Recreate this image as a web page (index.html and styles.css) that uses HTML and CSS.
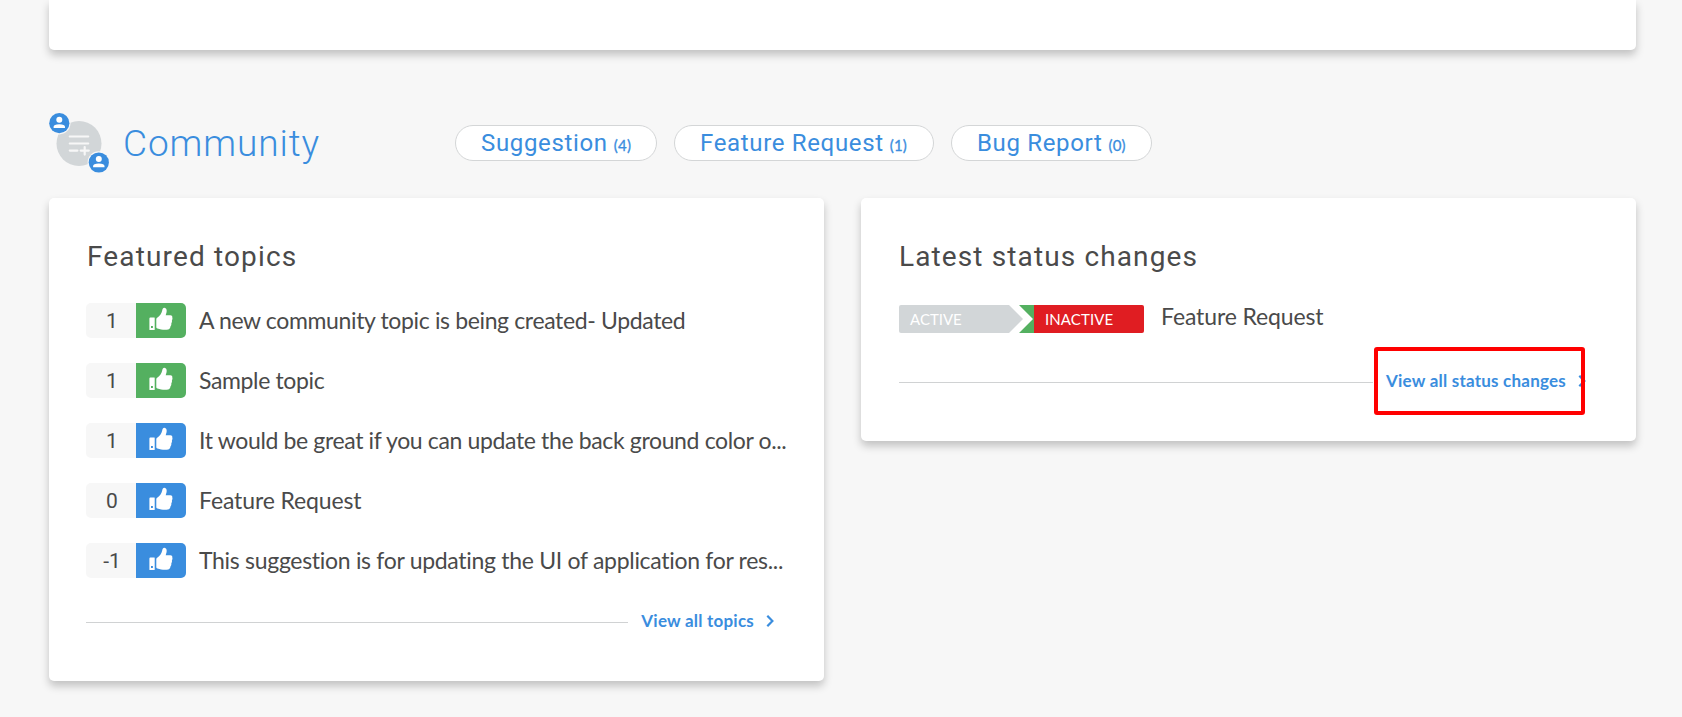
FILE: index.html
```html
<!DOCTYPE html>
<html lang="en">
<head>
<meta charset="utf-8">
<title>Community</title>
<link rel="stylesheet" href="styles.css">
</head>
<body>
<svg width="0" height="0" class="sprite" aria-hidden="true">
  <symbol id="thumb" viewBox="0 0 24 24">
    <path fill-rule="evenodd" d="M1.4 10.4H5.3Q5.7 10.4 5.7 10.8V22.4Q5.7 22.9 5.3 22.9H.9Q.4 22.9 .4 22.4V11.400Q.4 10.400 1.400 10.400ZM2 18.900V21H3.900V18.900Z"/>
    <path d="M7.300 12Q7.300 11.300 7.900 10.900C11.200 8.800 12.600 6.400 13.200 3.500C13.600 1.600 14.200 .7 15.400 .8C17.300 1 18 2.800 17.600 5L16.700 8.200H21.400C22.900 8.200 23.600 9.200 23.300 10.500C23.700 11.800 23.400 12.600 22.900 13.300C23.200 14.700 22.800 15.700 22.300 16.400C22.500 17.500 22.200 18.400 21.600 19.100C21.400 21.500 20.300 22.700 17.500 22.700C13.500 22.800 11.500 22.500 8.400 21.500Q7.300 21.200 7.300 20.300Z"/>
  </symbol>
  <symbol id="chevron" viewBox="0 0 8 12">
    <path d="M1.300 .8L6.400 6L1.300 11.200" fill="none" stroke="currentColor" stroke-width="2.200"/>
  </symbol>
</svg>
<main class="page">
  <section class="card card-top"></section>
  <header class="community">
    <svg class="community-icon" viewBox="0 0 60 60">
      <circle cx="30" cy="30.500" r="22.500" fill="#d2d6d8"/>
      <g fill="none" stroke="#f7f7f7" stroke-width="2.200" stroke-linecap="round">
        <path d="M20.800 23.500H39.200M20.800 30.500H39.200M20.800 37.600H28.400M31.700 37.600H39.800M35.700 34V41.600"/>
      </g>
      <g id="person">
        <circle cx="10.300" cy="10.200" r="11.200" fill="#f7f7f7"/>
        <circle cx="10.300" cy="10.200" r="10.100" fill="#3a8dde"/>
        <circle cx="10.300" cy="6.800" r="3" fill="#fff"/>
        <path d="M4.600 15V13.800Q4.600 11.300 10.300 11.300T16 13.800V15Z" fill="#fff"/>
      </g>
      <use href="#person" x="39.500" y="39.300"/>
    </svg>
    <h1 class="title">Community</h1>
    <nav class="pills">
      <a class="pill pill-suggestion"><span class="name">Suggestion</span><span class="count">(4)</span></a>
      <a class="pill pill-feature"><span class="name">Feature Request</span><span class="count">(1)</span></a>
      <a class="pill pill-bug"><span class="name">Bug Report</span><span class="count">(0)</span></a>
    </nav>
  </header>
  <div class="columns">
    <section class="card topics">
      <h2 class="heading heading-topics">Featured topics</h2>
      <ul class="list">
        <li class="topic"><span class="votes">1</span><span class="like green"><svg><use href="#thumb"/></svg></span><span class="text">A new community topic is being created- Updated</span></li>
        <li class="topic"><span class="votes">1</span><span class="like green"><svg><use href="#thumb"/></svg></span><span class="text">Sample topic</span></li>
        <li class="topic"><span class="votes">1</span><span class="like"><svg><use href="#thumb"/></svg></span><span class="text">It would be great if you can update the back ground color o...</span></li>
        <li class="topic"><span class="votes">0</span><span class="like"><svg><use href="#thumb"/></svg></span><span class="text short">Feature Request</span></li>
        <li class="topic"><span class="votes">-1</span><span class="like"><svg><use href="#thumb"/></svg></span><span class="text long">This suggestion is for updating the UI of application for res...</span></li>
      </ul>
      <div class="more"><span class="rule"></span><a class="link">View all topics</a><svg class="chevron"><use href="#chevron"/></svg></div>
    </section>
    <section class="card changes">
      <h2 class="heading">Latest status changes</h2>
      <div class="change">
        <span class="status from">ACTIVE</span>
        <span class="notch"></span>
        <span class="status to">INACTIVE</span>
        <span class="text short">Feature Request</span>
      </div>
      <div class="more"><span class="rule"></span><a class="link">View all status changes</a><svg class="chevron"><use href="#chevron"/></svg><span class="highlight"></span></div>
    </section>
  </div>
</main>
</body>
</html>
```
FILE: styles.css
```css
* { box-sizing: border-box; }
body { margin: 0; background: #f7f7f7; color: #4a4a4a; font-family: Lato, sans-serif; height: 717px; overflow: hidden; }
.sprite { display: block; width: 0; height: 0; }
.page { padding: 0 46px 0 49px; }
.card { background: #fff; border-radius: 5px; box-shadow: 0 5px 8px rgba(0, 0, 0, .22); }
.card-top { height: 50px; border-radius: 0 0 5px 5px; }
.community { display: flex; align-items: flex-start; height: 148px; padding-top: 63px; }
.community-icon { width: 60px; height: 60px; flex: none; }
.title { margin: 10px 0 0 14px; width: 332px; font: 300 37px/42px Roboto, sans-serif; letter-spacing: .9px; color: #3a8dde; }
.pills { display: flex; gap: 17px; margin-top: 12px; }
.pill { display: flex; align-items: baseline; height: 36px; padding-left: 25px; border: 1px solid #d4d6d7; border-radius: 18px; background: #fff; color: #3a8dde; font: 400 24px/34px Roboto, sans-serif; white-space: nowrap; }
.pill-suggestion { width: 202px; }
.pill-feature { width: 260px; }
.pill-bug { width: 201px; }
.name { letter-spacing: .660px; }
.count { margin-left: 6px; font: 400 15px/34px Lato, sans-serif; letter-spacing: .2px; -webkit-text-stroke: .3px; }
.columns { display: flex; align-items: flex-start; gap: 37px; }
.topics, .changes { width: 775px; }
.topics { height: 483px; padding: 41px 37px 0; }
.changes { height: 243px; padding: 41px 38px 0; }
.heading { margin: 0; font: 400 28px/36px Roboto, sans-serif; letter-spacing: 1.120px; white-space: nowrap; }
.heading-topics { padding-left: 1px; letter-spacing: 1.140px; }
.list { list-style: none; margin: 28px 0 0; padding: 0; display: grid; gap: 25px; }
.topic { display: flex; height: 35px; align-items: center; }
.votes { width: 50px; height: 35px; padding-left: 2px; background: #f7f7f7; border-radius: 5px 0 0 5px; text-align: center; font: 400 21px/37px Roboto, sans-serif; }
.like { display: flex; align-items: center; justify-content: center; width: 50px; height: 35px; background: #3a8dde; border-radius: 0 5px 5px 0; }
.like.green { background: #54b060; }
.like svg { width: 24px; height: 24px; fill: #fff; margin: 0 0 3px; }
.text { margin-left: 13px; font-size: 23px; line-height: 35px; letter-spacing: -.360px; white-space: nowrap; }
.text.short { letter-spacing: -.120px; }
.text.long { letter-spacing: -.300px; }
.more { display: flex; align-items: center; position: relative; height: 24px; margin-top: 31px; }
.rule { flex: 1; height: 1px; margin-top: 3px; background: #d0d2d3; }
.link { margin-left: 13px; color: #3a8dde; font-size: 17px; font-weight: 700; line-height: 24px; letter-spacing: .220px; white-space: nowrap; }
.chevron { width: 8px; height: 12px; margin: 0 13px 0 12px; color: #3a8dde; }
.change { display: flex; margin-top: 30px; height: 28px; align-items: center; }
.status { height: 28px; color: #fff; font-size: 15px; line-height: 28px; padding-left: 11px; }
.from { width: 124px; margin-right: -4px; border-radius: 2px 0 0 2px; background: #d2d6d8; clip-path: polygon(0 0, 110px 0, 124px 14px, 110px 28px, 0 28px); }
.notch { width: 15px; height: 28px; background: #54b060; clip-path: polygon(0 0, 100% 0, 100% 100%, 0 100%, 14px 50%); }
.to { width: 110px; border-radius: 0 2px 2px 0; background: #e01d22; letter-spacing: .100px; }
.change .text { margin: -5px 0 0 17px; }
.changes .more { margin-top: 36px; }
.changes .chevron { margin-right: 12px; }
.highlight { position: absolute; left: 475px; top: -22px; width: 211px; height: 68px; border: 4px solid #f00; border-radius: 3px; }
```
